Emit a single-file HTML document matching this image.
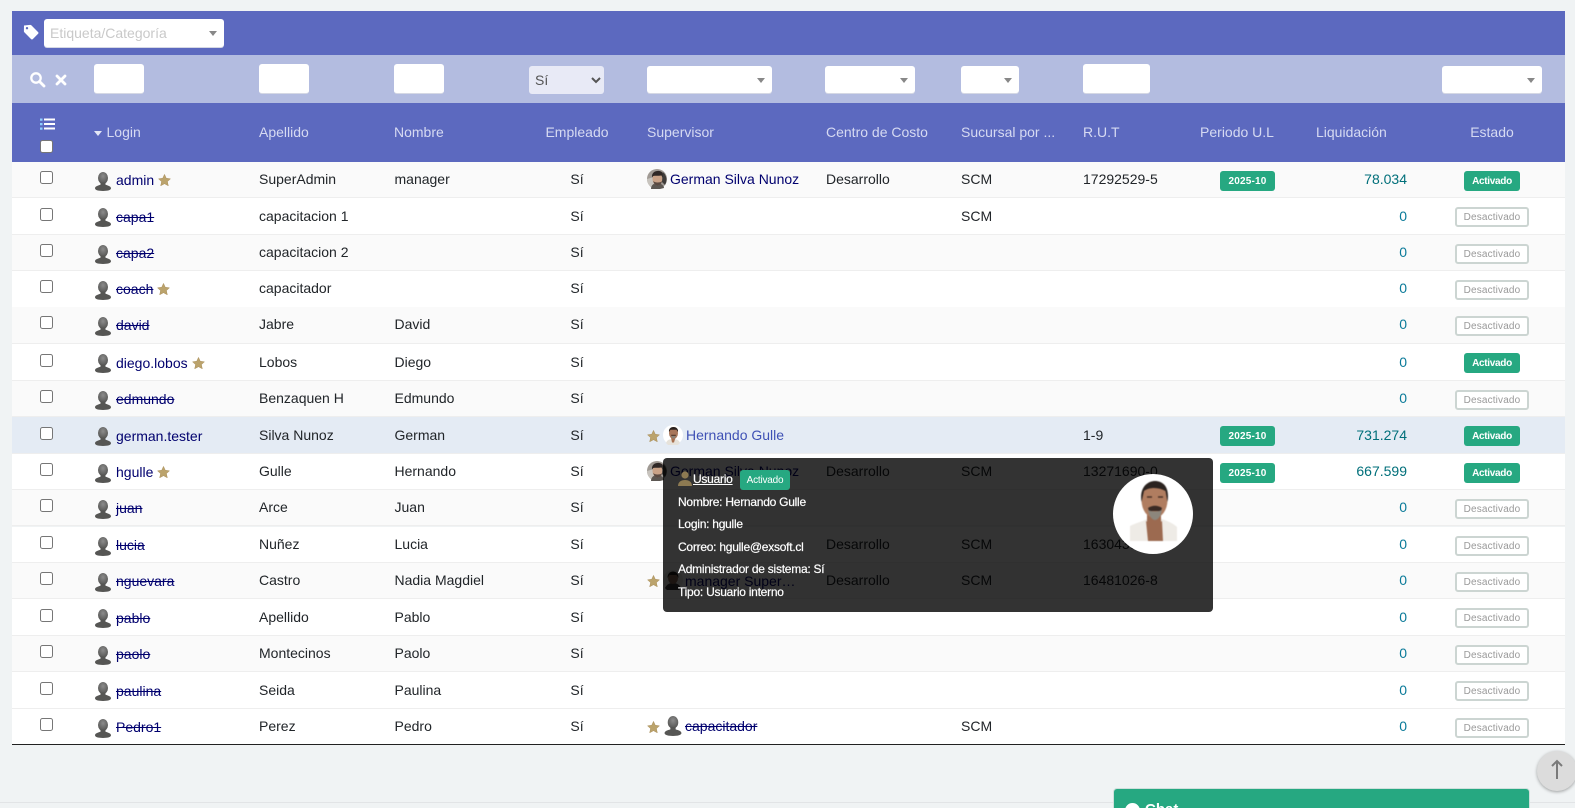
<!DOCTYPE html>
<html lang="es"><head><meta charset="utf-8"><title>Usuarios</title>
<style>
*{box-sizing:border-box}
html,body{margin:0;padding:0;width:1575px;height:808px;overflow:hidden;background:#f0f3f4;font-family:"Liberation Sans",Arial,sans-serif;font-size:14px;color:#212529}
#page{position:relative;width:1575px;height:808px;overflow:hidden}
.abs,.bar,.r,.c,.h{position:absolute}
.bar{left:12px;width:1553px}
.inp{position:absolute;border:0;border-bottom:1px solid #d5d8e4;border-radius:3px;background:#fff;padding:0;display:block}
.sel{position:absolute;height:27px;top:66px;background:#fff;border-radius:3px;box-shadow:0 1px 0 #d5d8e4}
.sel:after{content:"";position:absolute;right:7px;top:12px;border:4px solid transparent;border-top:5px solid #888;border-bottom:0}
.h{top:103px;line-height:58px;color:#d6daf2;white-space:nowrap;height:59px}
.r{left:12px;width:1553px;height:36.45px;border-bottom:1px solid #eeeeee;background:#fff}
.r.o{background:#fafafa}
.r.hv{background:#e4ebf4}
.c{top:.3px;line-height:34px;white-space:nowrap}
.cb{position:absolute;left:28px;top:9.3px;width:13px;height:13px;border:1px solid #767676;border-radius:2.5px;background:#fff}
.pi{position:absolute;left:82px;top:10px;width:18px;height:19px}
.l{left:104px;top:1.3px;color:#00006e}
.l.s,.s{text-decoration:line-through}
.a{left:247px}.n{left:382.500px}.e{left:515px;width:100px;text-align:center}
.su{left:635px;display:flex;align-items:center;height:34px}
.cc{left:814px}.sc{left:949px}.ru{left:1071px}
.li{left:1295px;width:100px;text-align:right;color:#006f7a}
.li.z{color:#0a7a99}
.b{position:absolute;top:9px;height:20px;border-radius:3px;background:#26a881;color:#fff;font-size:10px;font-weight:bold;line-height:21px;text-align:center}
.per{left:1208px;width:55px;letter-spacing:.2px}
.act{left:1452px;width:56px;letter-spacing:-.3px}
.des{left:1443px;width:74px;background:#fff;border:2px solid #ccd5d2;color:#999;font-weight:normal;line-height:17px;letter-spacing:.15px}
.star{width:13px;height:12px;display:inline-block;vertical-align:-1px;margin-left:4px}
.av{width:20px;height:20px;display:block;margin-right:3px;filter:blur(.3px)}
.su .star{margin:2px 3px 0 0}
.tip{position:absolute;left:663px;top:458px;width:550px;height:154px;background:rgba(0,0,0,.8);border-radius:4px;color:#fff;font-size:12px}
.tl{position:absolute;left:15px;line-height:16px;white-space:nowrap;letter-spacing:-.25px;-webkit-text-stroke:.2px #fff}
</style></head><body><div id="page">
<svg width="0" height="0" style="position:absolute">
<defs>
<radialGradient id="pg" cx=".5" cy=".35" r=".75"><stop offset="0" stop-color="#8c8c8c"/><stop offset="1" stop-color="#4a4a48"/></radialGradient>
<symbol id="person" viewBox="0 0 18 19"><ellipse cx="9" cy="6" rx="5" ry="6" fill="url(#pg)"/><path d="M6.500 10.500h5v2.200c2.600.8 5.500 1.600 5.500 3.600 0 1.900-3.600 2.700-8 2.700s-8-.8-8-2.700c0-2 2.900-2.800 5.500-3.600z" fill="#565654"/></symbol>
<symbol id="star" viewBox="0 0 13 12"><path d="M6.500.4l1.800 3.900 4.200.5-3.100 2.800.9 4.200-3.800-2.100-3.800 2.100.9-4.200L.5 4.800l4.200-.5z" fill="#bba36c" stroke="#a98e5a" stroke-width=".5"/></symbol>
<symbol id="german" viewBox="0 0 20 20"><circle cx="10" cy="10" r="10" fill="#a09a94"/><path d="M0 10a10 10 0 0 0 7 9.500V8z" fill="#c8c4be"/><path d="M4 20c0-4 3-6 6-6s7 2 7 5l-4 1z" fill="#5c5752"/><ellipse cx="10.500" cy="10" rx="5" ry="6.300" fill="#c9a287"/><path d="M5 8.500C4.500 3 9 1.500 12.500 2 16 2.500 17 6 15.800 9.500L14.500 6.500C11 7 8 6.500 6.200 7z" fill="#2f2826"/><path d="M6.200 12c1 3.500 2.500 4.500 4.300 4.500S14.300 15.500 15 12c-1 1.200-2.500 1.500-4.500 1.500S7.200 13 6.200 12z" fill="#5a4a42"/><path d="M15.800 3A10 10 0 0 1 18 16l-3-3z" fill="#3f3c3a"/></symbol>
<symbol id="herS" viewBox="0 0 20 20"><circle cx="10" cy="10" r="10" fill="#fff"/><path d="M3 18c1-3 3.500-4 7-4s6 1 7 4l-2 2H5z" fill="#e6e2da"/><path d="M8 12.500h4.500l-1.500 5H9z" fill="#a66f4e"/><ellipse cx="10.500" cy="8" rx="4.500" ry="6" fill="#a8765a"/><path d="M6 7C5.500 3.500 8 2 10.500 2S15.500 3.500 15 7L13.500 4.800H7.500z" fill="#2a211d"/><path d="M8.200 9.800h4.600v.9H8.200z" fill="#3a2a22"/><path d="M8.400 11h4.200l-.8 2.200H9.200z" fill="#8a8278"/></symbol>
<symbol id="mgr" viewBox="0 0 20 20"><circle cx="10" cy="10" r="10" fill="#e5e3e0"/><path d="M2 18c2-4 5-5 8-5s6 1 8 5a10 10 0 0 1-16 0z" fill="#3a3a3a"/><ellipse cx="10" cy="8" rx="5" ry="6" fill="#8a6a55"/><path d="M4.500 8C4.500 3 7.500 1.500 10 1.500S15.500 3 15.500 8L13.500 5H6.500z" fill="#201a18"/></symbol>
<symbol id="tag" viewBox="0 0 16 16"><path fill-rule="evenodd" d="M1 1.500 7.200.9c.5 0 .8.100 1.100.4l6.800 6.800c.5.500.5 1.200 0 1.700l-5.300 5.300c-.5.500-1.200.5-1.700 0L1.300 8.300C1 8 .9 7.700.9 7.300zM4 3a1.200 1.200 0 1 0 0 2.400A1.200 1.200 0 0 0 4 3z" fill="#fff"/></symbol>
</defs></svg>

<div class="bar" style="top:11px;height:44px;background:#5c69bf"></div>
<svg class="abs" style="left:23px;top:24px;width:16px;height:16px"><use href="#tag"/></svg>
<div class="sel" style="left:44px;top:19px;width:180px;height:28px;color:#c9c9c9;line-height:28px;padding-left:6px">Etiqueta/Categoría</div>

<div class="bar" style="top:55px;height:48px;background:#b3bce0"></div>
<svg class="abs" style="left:29px;top:71px;width:17px;height:17px" viewBox="0 0 17 17"><circle cx="7" cy="7" r="4.700" fill="none" stroke="#fff" stroke-width="2.300"/><path d="M10.500 10.500l4.500 4.500" stroke="#fff" stroke-width="2.800" stroke-linecap="round"/></svg>
<svg class="abs" style="left:55px;top:74px;width:12px;height:12px" viewBox="0 0 12 12"><path d="M2 2l8 8M10 2l-8 8" stroke="#fff" stroke-width="2.800" stroke-linecap="round"/></svg>
<input class="inp" style="left:94px;top:64px;width:50px;height:30px">
<input class="inp" style="left:259px;top:64px;width:50px;height:30px">
<input class="inp" style="left:394px;top:64px;width:50px;height:30px">
<select class="abs" style="left:529px;top:66px;width:75px;height:28px;border:0;border-radius:3px;background:#e8eaf6;color:#555;font:14px 'Liberation Sans',sans-serif;padding-left:2px"><option>Sí</option></select>
<div class="sel" style="left:647px;width:125px"></div>
<div class="sel" style="left:825px;width:90px"></div>
<div class="sel" style="left:961px;width:58px"></div>
<input class="inp" style="left:1083px;top:64px;width:67px;height:30px">
<div class="sel" style="left:1442px;width:100px"></div>

<div class="bar" style="top:103px;height:59px;background:#5c69bf"></div>
<svg class="abs" style="left:40px;top:118px;width:15px;height:12px" viewBox="0 0 15 12"><path d="M4 1.500h11M4 6h11M4 10.500h11" stroke="#fff" stroke-width="2"/><path d="M0 .5h2.500v2.200H0zM0 5h2.500v2.200H0zM0 9.500h2.500v2.200H0z" fill="#8fd0ff"/></svg>
<div class="abs" style="left:40px;top:140px;width:13px;height:13px;background:#fff;border:1px solid #767676;border-radius:2.5px"></div>
<div class="abs" style="left:94px;top:130.500px;border:4px solid transparent;border-top:5px solid #e3e6f5;border-bottom:0"></div>
<div class="h" style="left:106.500px">Login</div>
<div class="h" style="left:259px">Apellido</div>
<div class="h" style="left:394px">Nombre</div>
<div class="h" style="left:527px;width:100px;text-align:center">Empleado</div>
<div class="h" style="left:647px">Supervisor</div>
<div class="h" style="left:826px">Centro de Costo</div>
<div class="h" style="left:961px">Sucursal por ...</div>
<div class="h" style="left:1083px">R.U.T</div>
<div class="h" style="left:1187px;width:100px;text-align:center">Periodo U.L</div>
<div class="h" style="left:1316px">Liquidación</div>
<div class="h" style="left:1442px;width:100px;text-align:center">Estado</div>

<div class="r o" style="top:162px"><div class="cb"></div><svg class="pi"><use href="#person"/></svg><div class="c l">admin<svg class="star"><use href="#star"/></svg></div><div class="c a">SuperAdmin</div><div class="c n">manager</div><div class="c e">Sí</div><div class="c su"><svg class="av"><use href="#german"/></svg><span style="color:#00006e">German Silva Nunoz</span></div><div class="c cc">Desarrollo</div><div class="c sc">SCM</div><div class="c ru">17292529-5</div><div class="b per">2025-10</div><div class="c li">78.034</div><div class="b act">Activado</div></div>
<div class="r" style="top:198.450px"><div class="cb"></div><svg class="pi"><use href="#person"/></svg><div class="c l s">capa1</div><div class="c a">capacitacion 1</div><div class="c e">Sí</div><div class="c sc">SCM</div><div class="c li z">0</div><div class="b des">Desactivado</div></div>
<div class="r o" style="top:234.900px"><div class="cb"></div><svg class="pi"><use href="#person"/></svg><div class="c l s">capa2</div><div class="c a">capacitacion 2</div><div class="c e">Sí</div><div class="c li z">0</div><div class="b des">Desactivado</div></div>
<div class="r" style="top:271.100px"><div class="cb"></div><svg class="pi"><use href="#person"/></svg><div class="c l"><span class="s">coach</span><svg class="star"><use href="#star"/></svg></div><div class="c a">capacitador</div><div class="c e">Sí</div><div class="c li z">0</div><div class="b des">Desactivado</div></div>
<div class="r o" style="top:307.150px;height:37.100px"><div class="cb"></div><svg class="pi"><use href="#person"/></svg><div class="c l s">david</div><div class="c a">Jabre</div><div class="c n">David</div><div class="c e">Sí</div><div class="c li z">0</div><div class="b des">Desactivado</div></div>
<div class="r" style="top:344.250px"><div class="cb"></div><svg class="pi"><use href="#person"/></svg><div class="c l">diego.lobos<svg class="star"><use href="#star"/></svg></div><div class="c a">Lobos</div><div class="c n">Diego</div><div class="c e">Sí</div><div class="c li z">0</div><div class="b act">Activado</div></div>
<div class="r o" style="top:380.700px"><div class="cb"></div><svg class="pi"><use href="#person"/></svg><div class="c l s">edmundo</div><div class="c a">Benzaquen H</div><div class="c n">Edmundo</div><div class="c e">Sí</div><div class="c li z">0</div><div class="b des">Desactivado</div></div>
<div class="r hv" style="top:417.250px"><div class="cb"></div><svg class="pi"><use href="#person"/></svg><div class="c l">german.tester</div><div class="c a">Silva Nunoz</div><div class="c n">German</div><div class="c e">Sí</div><div class="c su"><svg class="star"><use href="#star"/></svg><svg class="av"><use href="#herS"/></svg><span style="color:#3f51b5">Hernando Gulle</span></div><div class="c ru">1-9</div><div class="b per">2025-10</div><div class="c li">731.274</div><div class="b act">Activado</div></div>
<div class="r" style="top:453.600px"><div class="cb"></div><svg class="pi"><use href="#person"/></svg><div class="c l">hgulle<svg class="star"><use href="#star"/></svg></div><div class="c a">Gulle</div><div class="c n">Hernando</div><div class="c e">Sí</div><div class="c su"><svg class="av"><use href="#german"/></svg><span style="color:#00006e">German Silva Nunoz</span></div><div class="c cc">Desarrollo</div><div class="c sc">SCM</div><div class="c ru">13271690-0</div><div class="b per">2025-10</div><div class="c li">667.599</div><div class="b act">Activado</div></div>
<div class="r o" style="top:490.050px"><div class="cb"></div><svg class="pi"><use href="#person"/></svg><div class="c l s">juan</div><div class="c a">Arce</div><div class="c n">Juan</div><div class="c e">Sí</div><div class="c li z">0</div><div class="b des">Desactivado</div></div>
<div class="r" style="top:526.500px"><div class="cb"></div><svg class="pi"><use href="#person"/></svg><div class="c l s">lucia</div><div class="c a">Nuñez</div><div class="c n">Lucia</div><div class="c e">Sí</div><div class="c cc">Desarrollo</div><div class="c sc">SCM</div><div class="c ru">16304391-2</div><div class="c li z">0</div><div class="b des">Desactivado</div></div>
<div class="r o" style="top:562.950px"><div class="cb"></div><svg class="pi"><use href="#person"/></svg><div class="c l s">nguevara</div><div class="c a">Castro</div><div class="c n">Nadia Magdiel</div><div class="c e">Sí</div><div class="c su"><svg class="star"><use href="#star"/></svg><svg class="av"><use href="#mgr"/></svg><span style="color:#00006e;margin-left:-1px;padding-top:2px">manager Super…</span></div><div class="c cc">Desarrollo</div><div class="c sc">SCM</div><div class="c ru">16481026-8</div><div class="c li z">0</div><div class="b des">Desactivado</div></div>
<div class="r" style="top:599.400px"><div class="cb"></div><svg class="pi"><use href="#person"/></svg><div class="c l s">pablo</div><div class="c a">Apellido</div><div class="c n">Pablo</div><div class="c e">Sí</div><div class="c li z">0</div><div class="b des">Desactivado</div></div>
<div class="r o" style="top:635.850px"><div class="cb"></div><svg class="pi"><use href="#person"/></svg><div class="c l s">paolo</div><div class="c a">Montecinos</div><div class="c n">Paolo</div><div class="c e">Sí</div><div class="c li z">0</div><div class="b des">Desactivado</div></div>
<div class="r" style="top:672.300px"><div class="cb"></div><svg class="pi"><use href="#person"/></svg><div class="c l s">paulina</div><div class="c a">Seida</div><div class="c n">Paulina</div><div class="c e">Sí</div><div class="c li z">0</div><div class="b des">Desactivado</div></div>
<div class="r o" style="top:708.750px;background:#fff;border-bottom:1px solid #212121"><div class="cb"></div><svg class="pi"><use href="#person"/></svg><div class="c l s">Pedro1</div><div class="c a">Perez</div><div class="c n">Pedro</div><div class="c e">Sí</div><div class="c su"><svg class="star"><use href="#star"/></svg><svg class="av" style="margin-right:2px"><use href="#person"/></svg><span class="s" style="color:#00006e">capacitador</span></div><div class="c sc">SCM</div><div class="c li z">0</div><div class="b des">Desactivado</div></div>

<div class="tip">
<svg class="abs" style="left:15px;top:13px;width:14px;height:15px" viewBox="0 0 14 15"><circle cx="7" cy="4" r="3.600" fill="#8d7a52"/><path d="M0 15c0-4 3-6 7-6s7 2 7 6z" fill="#8d7a52"/></svg>
<div class="tl" style="left:30px;top:13px;text-decoration:underline">Usuario</div>
<div class="b" style="left:77px;top:12px;width:50px;font-size:10px;font-weight:normal;letter-spacing:-.2px">Activado</div>
<div class="tl" style="top:36px">Nombre: Hernando Gulle</div>
<div class="tl" style="top:58px">Login: hgulle</div>
<div class="tl" style="top:81px">Correo: hgulle@exsoft.cl</div>
<div class="tl" style="top:103px">Administrador de sistema: Sí</div>
<div class="tl" style="top:126px">Tipo: Usuario interno</div>
<svg class="abs" style="left:450px;top:16px;width:80px;height:80px" viewBox="-40 -40 80 80"><circle r="40" fill="#fff"/><g style="filter:blur(.6px)"><path d="M-23 27V12C-15 8-9 7-6 5H9C14 7 20 9 24 13V27z" fill="#eeebe6"/><path d="M-7 7L-5 27H10L9 7 1 13z" fill="#9c6a50"/><path d="M-6 -2H8V8L1 14-6 8z" fill="#9c6a50"/><ellipse cx="1.500" cy="-14" rx="13" ry="18" fill="#b07d60"/><path d="M-11.500 -12C-14 -27-5 -33 2 -33 10 -33 17 -27 14.500 -12L12.500 -23C6 -27-4 -27-9 -23z" fill="#2b2320"/><path d="M-5 -6C-1 -9 5 -9 9 -6L8 -3H-4z" fill="#3a2a24"/><path d="M-5 -4C-4 2-1 6 2 6 5 6 8 2 9 -4 5 -2-1 -2-5 -4z" fill="#8c867c"/><path d="M-6 -17h5M5 -17h5" stroke="#4a3228" stroke-width="1.400"/></g></svg>
</div>

<div class="abs" style="left:0;top:802px;width:1575px;height:6px;border-top:1px solid #e2e4e6"></div>
<div class="abs" style="left:1113px;top:788px;width:417px;height:20px;overflow:hidden;background:#26a881;border:1px solid #cfe0dc;border-bottom:0;border-radius:4px 4px 0 0"><div class="abs" style="left:11px;top:14px;width:15px;height:15px;border-radius:50%;background:#fff"></div><div class="abs" style="left:31px;top:12px;color:#fff;font-weight:bold;font-size:15px;line-height:18px">Chat</div></div>
<div class="abs" style="left:1537px;top:751px;width:40px;height:40px;border-radius:50%;background:#dcdcdc;box-shadow:0 1px 3px rgba(0,0,0,.35)"></div>
<svg class="abs" style="left:1549px;top:759px;width:16px;height:21px" viewBox="0 0 16 21"><path d="M8 20V2M3 7 8 2l5 5" fill="none" stroke="#7a7a7a" stroke-width="2"/></svg>
</div></body></html>
